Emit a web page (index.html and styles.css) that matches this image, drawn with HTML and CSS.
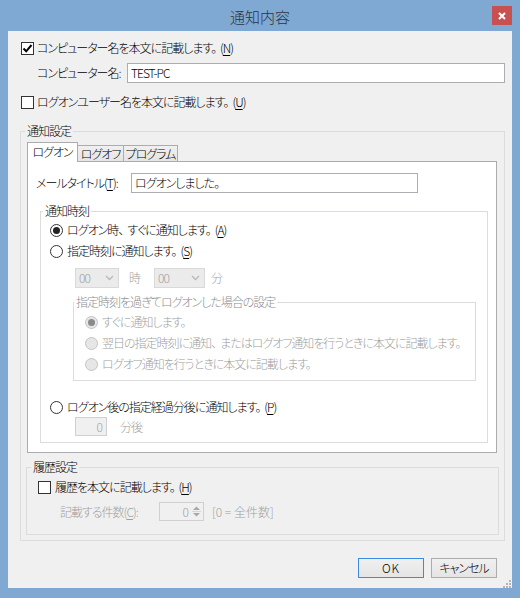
FILE: index.html
```html
<!DOCTYPE html>
<html lang="ja">
<head>
<meta charset="utf-8">
<title>通知内容</title>
<link rel="stylesheet" href="styles.css">
</head>
<body>
<div class="window">
  <div class="titlebar">
    <span></span>
    <div class="title">通知内容</div>
    <div class="close"><svg width="8" height="8" viewBox="0 0 8 8"><path d="M1 1 L7 7 M7 1 L1 7" stroke="#fff" stroke-width="2"/></svg></div>
  </div>
  <div class="client">
    <div class="row cbrow top1"><span class="cb"><svg width="11" height="11" viewBox="0 0 11 11"><path d="M1.5 5.5 L4.2 8.3 L9.5 2" fill="none" stroke="#000" stroke-width="2"/></svg></span><span>コンピューター名を本文に記載します<span class="p">。</span>(<u>N</u>)</span></div>
    <div class="row pcrow"><span class="lbl-pc">コンピューター名:</span><div class="textbox tb-pc">TEST-PC</div></div>
    <div class="row cbrow top2"><span class="cb"></span><span>ログオンユーザー名を本文に記載します<span class="p">。</span>(<u>U</u>)</span></div>

    <div class="group g-notify">
      <div class="legend">通知設定</div>
      <div class="tabs">
        <div class="tab sel">ログオン</div>
        <div class="tab t2">ログオフ</div>
        <div class="tab t3">プログラム</div>
      </div>
      <div class="panel">
        <div class="row mailrow"><span class="lbl-mail">メールタイトル(<u>T</u>):</span><div class="textbox tb-mail">ログオンしました。</div></div>
        <div class="group g-time">
          <div class="legend legend-w">通知時刻</div>
          <div class="row rrow r1"><span class="radio on"></span><span>ログオン時<span class="p">、</span>すぐに通知します<span class="p">。</span>(<u>A</u>)</span></div>
          <div class="row rrow r2"><span class="radio"></span><span>指定時刻に通知します<span class="p">。</span>(<u>S</u>)</span></div>
          <div class="row comborow dis">
            <div class="combo c1"><span>00</span><svg width="9" height="6" viewBox="0 0 9 6"><path d="M1 1 L4.5 4.5 L8 1" fill="none" stroke="#b9b9b9" stroke-width="1.3"/></svg></div>
            <span class="u-hour">時</span>
            <div class="combo c2"><span>00</span><svg width="9" height="6" viewBox="0 0 9 6"><path d="M1 1 L4.5 4.5 L8 1" fill="none" stroke="#b9b9b9" stroke-width="1.3"/></svg></div>
            <span class="u-min">分</span>
          </div>
          <div class="group g-late">
            <div class="legend legend-w dis">指定時刻を過ぎてログオンした場合の設定</div>
            <div class="row srow s1 dis"><span class="radio disr on"></span><span>すぐに通知します。</span></div>
            <div class="row srow s2 dis"><span class="radio disr"></span><span>翌日の指定時刻に通知<span class="p">、</span>またはログオフ通知を行うときに本文に記載します。</span></div>
            <div class="row srow s2 dis"><span class="radio disr"></span><span>ログオフ通知を行うときに本文に記載します。</span></div>
          </div>
          <div class="row rrow r3"><span class="radio"></span><span>ログオン後の指定経過分後に通知します<span class="p">。</span>(<u>P</u>)</span></div>
          <div class="row numrow dis"><div class="numbox">0</div><span class="u-after">分後</span></div>
        </div>
      </div>
      <div class="group g-hist">
        <div class="legend">履歴設定</div>
        <div class="row hcb"><span class="cb"></span><span>履歴を本文に記載します<span class="p">。</span>(<u>H</u>)</span></div>
        <div class="row countrow dis"><span class="lbl-count">記載する件数(<u>C</u>):</span>
          <div class="spin"><span class="spinval">0</span><span class="arrows"><svg width="9" height="13" viewBox="0 0 9 13"><path d="M1 5 L4.5 1.5 L8 5 Z" fill="#a8a8a8"/><path d="M1 8 L4.5 11.5 L8 8 Z" fill="#a8a8a8"/><path d="M0 6.5 H9" stroke="#d6d6d6"/></svg></span></div>
          <span class="u-all">[0 = 全件数]</span>
        </div>
      </div>
    </div>

    <div class="buttons">
      <div class="btn ok">OK</div>
      <div class="btn">キャンセル</div>
    </div>
    <div class="griprow"><svg width="8" height="8" viewBox="0 0 8 8"><g fill="#b5b5b5"><rect x="6" y="0" width="2" height="2"/><rect x="3" y="3" width="2" height="2"/><rect x="6" y="3" width="2" height="2"/><rect x="0" y="6" width="2" height="2"/><rect x="3" y="6" width="2" height="2"/><rect x="6" y="6" width="2" height="2"/></g></svg></div>
  </div>
</div>
</body>
</html>
```

FILE: styles.css
```css
html, body {
  margin: 0;
  padding: 0;
}
body {
  font-family: "Noto Sans CJK JP", "Noto Sans", sans-serif;
  font-size: 12px;
  font-weight: 300;
  font-feature-settings: "palt";
  letter-spacing: -1px;
  color: #000;
}
u {
  text-decoration: underline;
  text-underline-offset: 2px;
}
.p {
  margin-right: 4px;
}
.window {
  width: 520px;
  height: 598px;
  box-sizing: border-box;
  background: #7fa8d3;
  padding: 0 8px 10px;
  display: flex;
  flex-direction: column;
}
.titlebar {
  height: 31px;
  flex: none;
  display: grid;
  grid-template-columns: 1fr auto 1fr;
}
.title {
  font-size: 15px;
  line-height: 31px;
  padding-top: 1px;
  color: #2e3440;
  letter-spacing: 0;
}
.close {
  justify-self: end;
  width: 20px;
  height: 19px;
  margin-top: 6px;
  background: #c75050;
  display: flex;
  align-items: center;
  justify-content: center;
}
.client {
  flex: 1;
  background: #f0f0f0;
  display: flex;
  flex-direction: column;
}
.row {
  display: flex;
  align-items: center;
  line-height: 16px;
  white-space: nowrap;
}
.dis {
  color: #a0a0a0;
}
.cb {
  width: 13px;
  height: 13px;
  box-sizing: border-box;
  border: 1px solid #333;
  background: #fff;
  display: flex;
  align-items: center;
  justify-content: center;
  flex: none;
}
.cbrow {
  height: 16px;
  padding-left: 13px;
  gap: 3px;
}
.top1 { margin-top: 9px; }
.top2 { margin-top: 11px; }
.pcrow {
  margin-top: 7px;
  height: 20px;
  padding-left: 29px;
}
.lbl-pc { width: 90px; }
.textbox {
  box-sizing: border-box;
  height: 20px;
  border: 1px solid #abadb3;
  background: #fff;
  padding-left: 3px;
  line-height: 18px;
}
.tb-pc { width: 378px; }

.group {
  box-sizing: border-box;
  border: 1px solid #dcdcdc;
  display: flex;
  flex-direction: column;
  align-items: flex-start;
}
.legend {
  margin: -9px 0 0 4px;
  padding: 0 2px;
  line-height: 16px;
  background: #f0f0f0;
  white-space: nowrap;
}
.legend-w {
  background: #fff;
  margin-left: 2px;
}
.g-notify {
  margin: 21px 0 0 12px;
  width: 485px;
  height: 410px;
}
.tabs {
  margin: 3px 0 0 6px;
  height: 19px;
  display: flex;
  align-items: flex-end;
}
.tab {
  box-sizing: border-box;
  height: 16px;
  border: 1px solid #acacac;
  border-bottom: none;
  background: linear-gradient(#f0f0f0, #e5e5e5);
  display: flex;
  align-items: center;
  justify-content: center;
  line-height: 14px;
  white-space: nowrap;
}
.tab.sel {
  width: 51px;
  height: 20px;
  background: #fff;
  margin-bottom: -1px;
  position: relative;
  z-index: 1;
  padding-bottom: 2px;
}
.tab.t2 { width: 46px; border-left: none; }
.tab.t3 { width: 54px; border-left: none; }
.panel {
  margin-left: 6px;
  box-sizing: border-box;
  width: 470px;
  height: 292px;
  border: 1px solid #acacac;
  background: #fff;
  display: flex;
  flex-direction: column;
  align-items: flex-start;
}
.mailrow {
  margin-top: 11px;
  height: 20px;
  padding-left: 8px;
}
.lbl-mail { width: 95px; }
.tb-mail { width: 287px; }
.g-time {
  margin: 18px 0 0 12px;
  width: 448px;
  height: 232px;
}
.radio {
  width: 13px;
  height: 13px;
  box-sizing: border-box;
  border: 1px solid #333;
  border-radius: 50%;
  background: #fff;
  flex: none;
  display: flex;
  align-items: center;
  justify-content: center;
}
.radio.on::after {
  content: "";
  width: 7px;
  height: 7px;
  border-radius: 50%;
  background: #222;
}
.radio.disr {
  border-color: #c4c4c4;
  background: #e6e6e6;
}
.radio.disr.on::after {
  background: #8a8a8a;
}
.rrow {
  height: 16px;
  padding-left: 9px;
  gap: 4px;
}
.r1 { margin-top: 3px; }
.r2 { margin-top: 5px; }
.r3 { margin-top: 18px; }
.comborow {
  margin-top: 9px;
  height: 20px;
  padding-left: 34px;
}
.combo {
  box-sizing: border-box;
  height: 20px;
  border: 1px solid #d9d9d9;
  background: #ebebeb;
  display: flex;
  align-items: center;
  justify-content: space-between;
  padding: 0 4px 0 3px;
}
.c1 { width: 44px; }
.c2 { width: 51px; }
.u-hour { margin-left: 10px; }
.c2 { margin-left: 14px; }
.u-min { margin-left: 6px; }
.g-late {
  margin: 14px 0 0 32px;
  width: 403px;
  height: 79px;
}
.g-late .legend { margin-left: 0; color: #8c8c8c; }
.srow {
  height: 16px;
  padding-left: 11px;
  gap: 4px;
}
.s1 { margin-top: 4px; }
.s2 { margin-top: 5px; }
.numrow {
  margin-top: 2px;
  height: 19px;
  padding-left: 34px;
}
.numbox {
  box-sizing: border-box;
  width: 32px;
  height: 19px;
  border: 1px solid #d0d0d0;
  background: #f0f0f0;
  text-align: right;
  padding-right: 4px;
  line-height: 17px;
}
.u-after { margin-left: 13px; }

.g-hist {
  margin: 14px 0 0 5px;
  width: 473px;
  height: 68px;
}
.hcb {
  margin-top: 4px;
  height: 16px;
  padding-left: 11px;
  gap: 4px;
}
.countrow {
  margin-top: 7px;
  height: 19px;
  padding-left: 33px;
}
.lbl-count { width: 99px; }
.spin {
  box-sizing: border-box;
  width: 45px;
  height: 19px;
  border: 1px solid #d0d0d0;
  background: #f0f0f0;
  display: flex;
  align-items: center;
  justify-content: flex-end;
  padding-right: 2px;
  gap: 4px;
}
.spinval { line-height: 17px; }
.arrows { display: flex; }
.u-all { margin-left: 8px; letter-spacing: 0; }

.buttons {
  margin-top: 17px;
  display: flex;
  justify-content: flex-end;
  gap: 7px;
  padding-right: 15px;
}
.btn {
  box-sizing: border-box;
  width: 66px;
  height: 20px;
  border: 1px solid #acacac;
  background: linear-gradient(#f0f0f0, #e5e5e5);
  display: flex;
  align-items: center;
  justify-content: center;
  line-height: 16px;
}
.btn.ok {
  border-color: #3c8be0;
  letter-spacing: 1px;
}
.griprow {
  margin-top: 2px;
  display: flex;
  justify-content: flex-end;
  padding-right: 1px;
}
```
